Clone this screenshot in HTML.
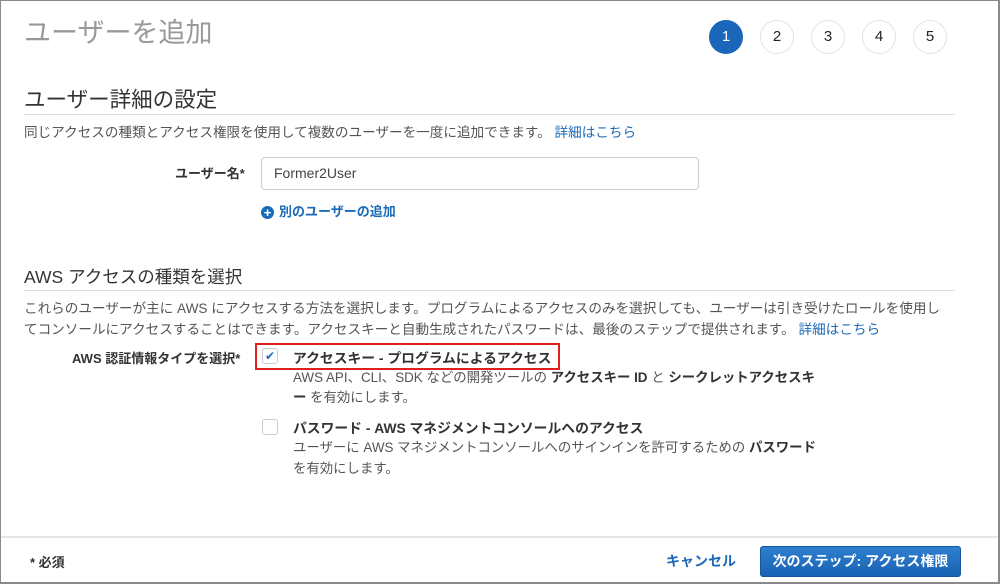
<!DOCTYPE html>
<html><head><meta charset="utf-8"><style>
*{margin:0;padding:0;box-sizing:border-box}
body{width:1000px;height:584px;background:#fff;font-family:"Liberation Sans","Noto Sans CJK JP",sans-serif;color:#333;position:relative;overflow:hidden}
.frame{position:absolute;left:0;top:0;width:1000px;height:584px;border:1px solid #8a8a8a;border-right-width:2px;border-bottom-width:2px}
.a{position:absolute;white-space:nowrap}
.step{position:absolute;top:20px;width:34px;height:34px;border-radius:50%;border:1px solid #e2e2e2;text-align:center;line-height:32px;font-size:15px;color:#222}
.b{font-weight:bold}
.link{color:#1a6ab8}
.p{font-size:13.6px;color:#555}
.q{font-size:13.4px;color:#555}
</style></head><body>
<div class="frame"></div>
<div class="a" style="left:24px;top:11px;font-size:27px;color:#999">ユーザーを追加</div>
<div class="step" style="left:709px;background:#1a66b8;border-color:#1a66b8;color:#fff">1</div>
<div class="step" style="left:760px">2</div>
<div class="step" style="left:811px">3</div>
<div class="step" style="left:862px">4</div>
<div class="step" style="left:913px">5</div>
<div class="a" style="left:24px;top:83px;font-size:21.5px;color:#333">ユーザー詳細の設定</div>
<div class="a" style="left:24px;top:114px;width:931px;border-top:1px solid #ddd"></div>
<div class="a p" style="left:24px;top:121px">同じアクセスの種類とアクセス権限を使用して複数のユーザーを一度に追加できます。 <span class="link">詳細はこちら</span></div>
<div class="a b" style="left:175px;top:163px;font-size:13px">ユーザー名*</div>
<div class="a" style="left:261px;top:157px;width:438px;height:33px;border:1px solid #ccc;border-radius:4px;padding:7px 12px;font-size:14px;color:#444">Former2User</div>
<div class="a b link" style="left:261px;top:201px;font-size:13px"><span style="display:inline-block;width:13px;height:13px;border-radius:50%;background:#1a6ab8;color:#fff;font-size:13px;line-height:13px;text-align:center;vertical-align:-1px;margin-right:5px">+</span>別のユーザーの追加</div>
<div class="a" style="left:24px;top:264px;font-size:17.5px;color:#333">AWS アクセスの種類を選択</div>
<div class="a" style="left:24px;top:290px;width:931px;border-top:1px solid #ddd"></div>
<div class="a p" style="left:24px;top:298px;line-height:21px">これらのユーザーが主に AWS にアクセスする方法を選択します。プログラムによるアクセスのみを選択しても、ユーザーは引き受けたロールを使用し<br>てコンソールにアクセスすることはできます。アクセスキーと自動生成されたパスワードは、最後のステップで提供されます。 <span class="link">詳細はこちら</span></div>
<div class="a b" style="left:72px;top:348px;font-size:13px">AWS 認証情報タイプを選択*</div>
<div class="a" style="left:255px;top:343px;width:305px;height:27px;border:2px solid #e02020"></div>
<div class="a" style="left:262px;top:348px;width:16px;height:16px;border:1px solid #ccc;border-radius:3px;color:#1a66b8;font-size:12px;line-height:14px;text-align:center">✔</div>
<div class="a b" style="left:293px;top:347px;font-size:13.8px">アクセスキー - プログラムによるアクセス</div>
<div class="a q" style="left:293px;top:368px;line-height:20px">AWS API、CLI、SDK などの開発ツールの <b style="color:#333">アクセスキー ID</b> と <b style="color:#333">シークレットアクセスキ<br>ー</b> を有効にします。</div>
<div class="a" style="left:262px;top:419px;width:16px;height:16px;border:1px solid #ccc;border-radius:3px"></div>
<div class="a b" style="left:293px;top:417px;font-size:13.8px">パスワード - AWS マネジメントコンソールへのアクセス</div>
<div class="a q" style="left:293px;top:437px;line-height:21px">ユーザーに AWS マネジメントコンソールへのサインインを許可するための <b style="color:#333">パスワード</b><br>を有効にします。</div>
<div class="a" style="left:1px;top:536px;width:997px;border-top:2px solid #e6e6e6"></div>
<div class="a b" style="left:30px;top:552px;font-size:13px">* 必須</div>
<div class="a b link" style="left:666px;top:551px;font-size:14px">キャンセル</div>
<div class="a b" style="left:760px;top:546px;width:201px;height:31px;border-radius:3px;background:linear-gradient(#2f7fd0,#1a62b3);border:1px solid #15569f;color:#fff;font-size:14px;text-align:center;line-height:29px">次のステップ: アクセス権限</div>
</body></html>
